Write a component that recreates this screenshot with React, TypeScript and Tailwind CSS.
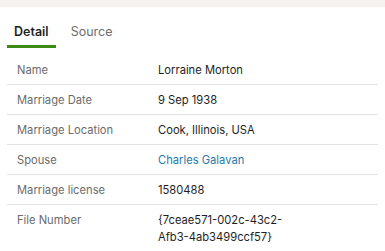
const ROWS: { label: string; value: string[]; link?: boolean }[] = [
  { label: 'Name', value: ['Lorraine Morton'] },
  { label: 'Marriage Date', value: ['9 Sep 1938'] },
  { label: 'Marriage Location', value: ['Cook, Illinois, USA'] },
  { label: 'Spouse', value: ['Charles Galavan'], link: true },
  { label: 'Marriage license', value: ['1580488'] },
  { label: 'File Number', value: ['{7ceae571-002c-43c2-', 'Afb3-4ab3499ccf57}'] },
]

export default function App() {
  return (
    <div className="w-[385px] h-[251px] bg-white overflow-hidden font-['Inter',sans-serif]">
      <div className="h-[7px] bg-[#f5f2ef]" />
      <div className="flex px-[7px] mt-[13px]">
        <div className="px-[7px] pt-[3px] pb-[4px] border-b-[3px] border-[#3b8a14] text-[12.5px] leading-[18px] font-semibold text-[#1f1f1f]">
          Detail
        </div>
        <div className="ml-[8px] px-[7px] pt-[3px] text-[12.5px] leading-[18px] text-[#6e6e6e]">Source</div>
      </div>
      <div className="mx-[7px] mt-[7px]">
        {ROWS.map((r, i) => (
          <div
            key={r.label}
            className={`flex pt-[7px] pb-[6px] text-[11.2px] leading-[16px] ${i < ROWS.length - 1 ? 'border-b border-[#e2e2e2]' : ''}`}
          >
            <div className="w-[151px] shrink-0 pl-[10px] text-[#6b6b6b]">{r.label}</div>
            <div className={r.link ? 'text-[#1f7aa8]' : 'text-[#1e1e1e]'}>
              {r.value.map((v) => (
                <div key={v} className={r.value.length > 1 ? 'leading-[17px]' : ''}>{v}</div>
              ))}
            </div>
          </div>
        ))}
      </div>
    </div>
  )
}
